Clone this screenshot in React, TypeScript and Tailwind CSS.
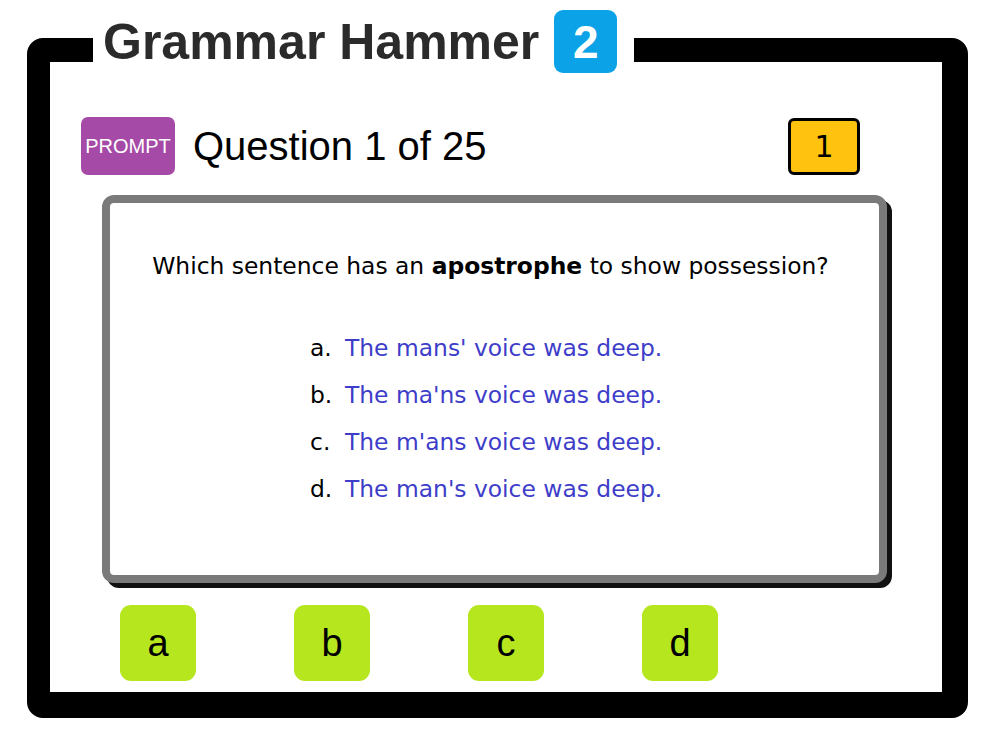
import React from 'react';

const options = [
  { key: 'a', text: "The mans' voice was deep." },
  { key: 'b', text: "The ma'ns voice was deep." },
  { key: 'c', text: "The m'ans voice was deep." },
  { key: 'd', text: "The man's voice was deep." },
];

export default function App() {
  return (
    <div className="relative w-[1000px] h-[750px] bg-white pt-[38px] pl-[27px] font-['Liberation_Sans',Arial,sans-serif]">
      {/* frame */}
      <div className="w-[941px] h-[680px] border-l-[23px] border-t-[24px] border-r-[26px] border-b-[26px] border-black rounded-[16px] bg-white">
        <div className="flex items-center justify-between pl-[31px] pr-[82px] pt-[55px]">
          <div className="flex items-center gap-[18px]">
            <div className="w-[94px] h-[58px] rounded-[7px] bg-[#a54aa6] flex items-center justify-center text-white text-[20px]">
              PROMPT
            </div>
            <div className="text-[40px] leading-none text-black">Question 1 of 25</div>
          </div>
          <div className="w-[72px] h-[57px] border-[3px] border-black rounded-[6px] bg-[#ffc20e] flex items-center justify-center text-[30px] text-black font-['DejaVu_Sans',sans-serif]">
            1
          </div>
        </div>

        {/* question card */}
        <div className="ml-[52px] mt-[20px] w-[785px] h-[388px] border-[8px] border-[#7a7a7a] rounded-[12px] bg-white shadow-[5px_5px_0_#111] font-['DejaVu_Sans',sans-serif]">
          <div className="pt-[48px] pr-[8px] text-center text-[23.4px] leading-[30px] text-black">
            Which sentence has an <span className="font-bold">apostrophe</span> to show possession?
          </div>
          <div className="mt-[52px] ml-[200px] w-fit flex flex-col gap-[17px]">
            {options.map((o) => (
              <div key={o.key} className="flex items-center text-[23.4px] leading-[30px]">
                <span className="w-[35px] text-black">{o.key}.</span>
                <span className="text-[#3d3dc9]">{o.text}</span>
              </div>
            ))}
          </div>
        </div>

        {/* answer buttons */}
        <div className="flex gap-[98px] ml-[70px] mt-[22px]">
          {options.map((o) => (
            <div
              key={o.key}
              className="w-[76px] h-[76px] rounded-[11px] bg-[#b6e61e] flex items-center justify-center text-[38px] text-black"
            >
              {o.key}
            </div>
          ))}
        </div>
      </div>

      {/* title sitting over the top edge of the frame */}
      <div className="absolute left-[93px] top-[10px] h-[63px] bg-white pl-[10px] pr-[17px] flex items-center gap-[15px]">
        <span className="text-[50px] leading-none font-bold text-[#2b2b2b]">Grammar Hammer</span>
        <span className="w-[63px] h-[63px] rounded-[9px] bg-[#0ba2e8] flex items-center justify-center text-white font-bold text-[46px] leading-none">
          2
        </span>
      </div>
    </div>
  );
}
